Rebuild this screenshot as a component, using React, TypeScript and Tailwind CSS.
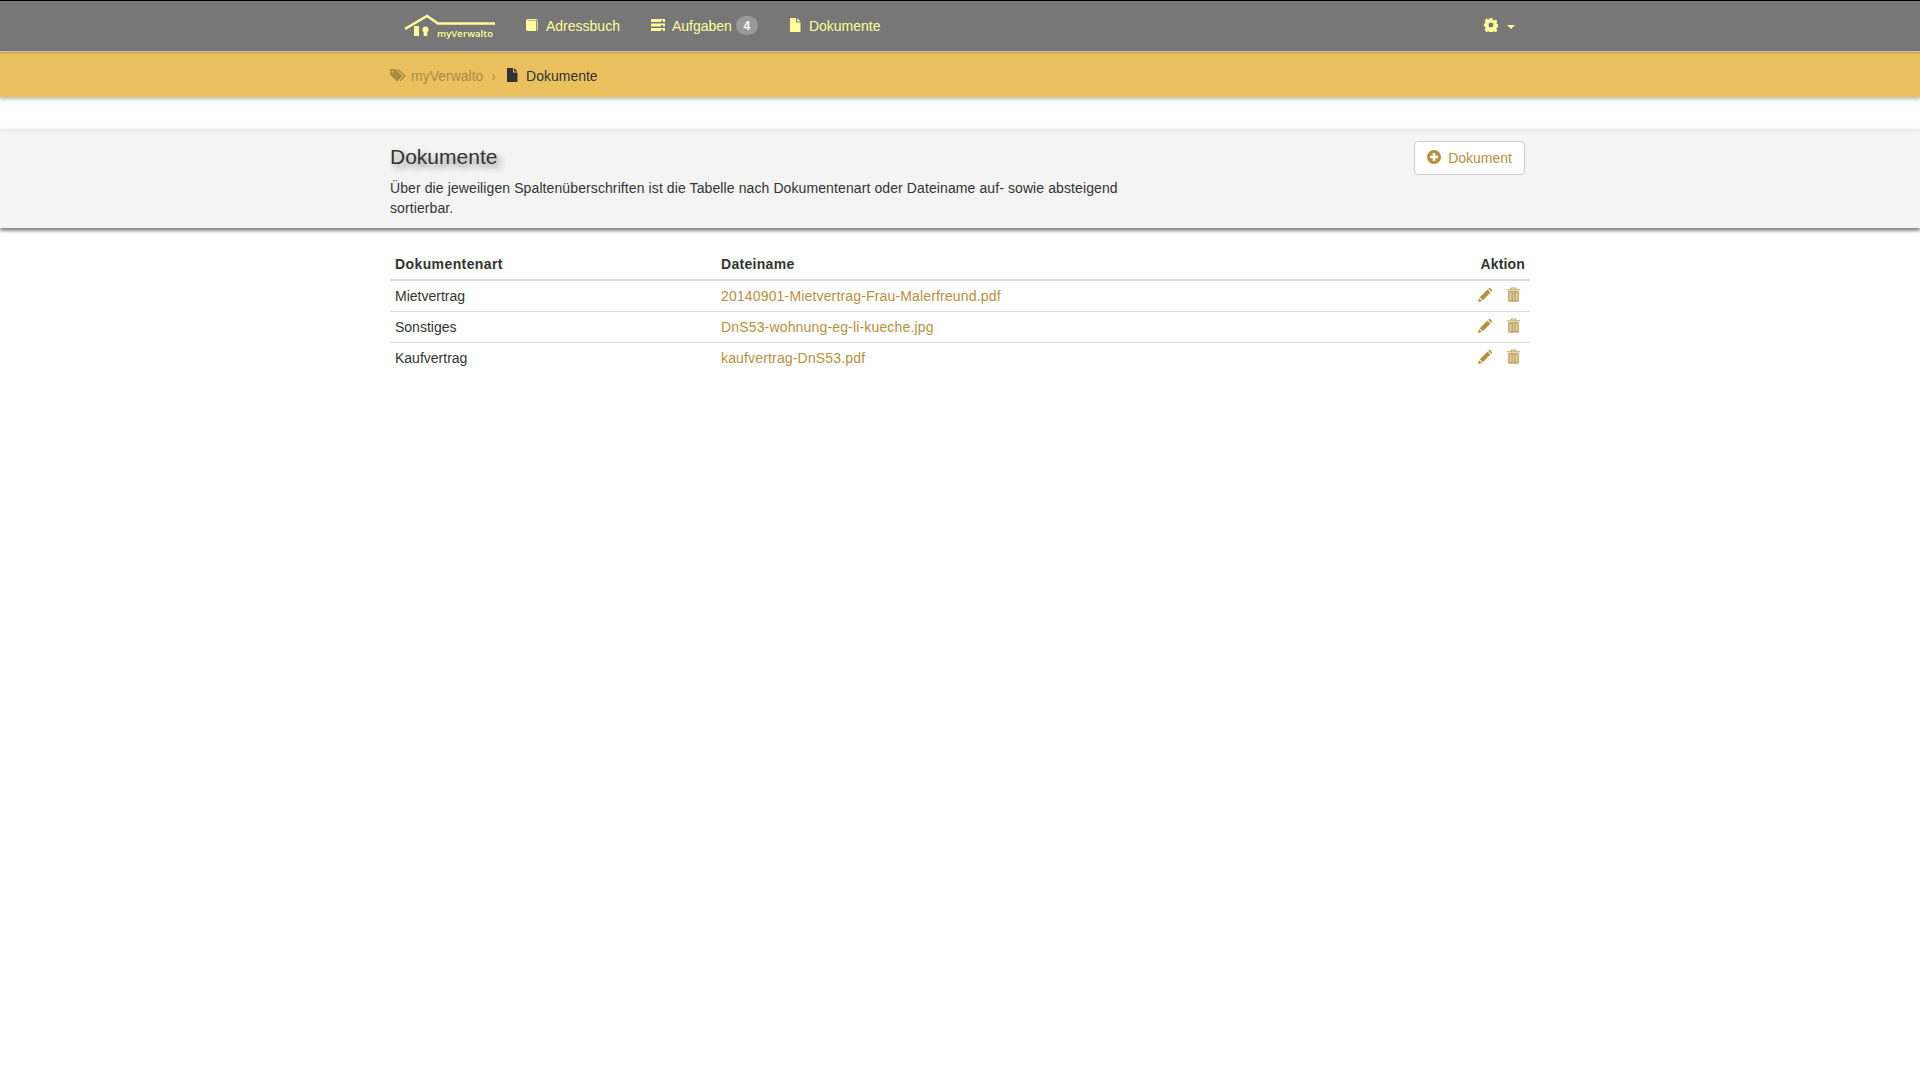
import React from 'react';

const Book = ({ className }: { className?: string }) => (
  <svg viewBox="0 0 14 14" className={className} fill="currentColor">
    <path d="M1 2.200 2.600 1H12v.9H3.600L2.600 2.600H11.200V13H2.200L1 12Z" />
    <path d="M12 2.200h1V12.600h-1z" opacity=".7" />
  </svg>
);

const Tasks = ({ className }: { className?: string }) => (
  <svg viewBox="0 0 14 14" className={className} fill="currentColor">
    <path d="M0 1h14v3H12V2.600h-2V4H0zM0 5.500h14v3h-2V7h-2v1.500H0zM0 10h14v3H12v-1.400h-2V13H0z" fillRule="evenodd" />
  </svg>
);

const FileIcon = ({ className }: { className?: string }) => (
  <svg viewBox="0 0 14 14" className={className} fill="currentColor">
    <path d="M2 0h6v4.500h4.500V14H2zM9 0l3.500 3.500H9z" />
  </svg>
);

const Cog = ({ className }: { className?: string }) => (
  <svg viewBox="0 0 14 14" className={className} fill="currentColor">
    <path
      fillRule="evenodd"
      d="M5.700 0h2.600l.4 1.900 1.200.5 1.700-1 1.800 1.800-1 1.700.5 1.200 2.100.4v2.600l-2.100.4-.5 1.200 1 1.700-1.800 1.800-1.700-1-1.200.5-.4 2.100H5.700l-.4-2.100-1.200-.5-1.700 1L.6 11.700l1-1.700-.5-1.200L0 8.300V5.700l1.100-.4.5-1.200-1-1.700L2.400.6l1.700 1 1.200-.5zM7 4.500a2.500 2.500 0 1 0 0 5 2.500 2.500 0 0 0 0-5z"
    />
  </svg>
);

const Tags = ({ className }: { className?: string }) => (
  <svg viewBox="0 0 17 14" className={className} fill="currentColor">
    <path d="M0 1h5.500l7 7-5.500 5.500-7-7zM2.500 2.500a1 1 0 1 0 0 2 1 1 0 0 0 0-2z" fillRule="evenodd" />
    <path d="M7 1h1.500l7.500 7-5.500 5.500-1-1L14 8z" />
  </svg>
);

const PlusSign = ({ className }: { className?: string }) => (
  <svg viewBox="0 0 14 14" className={className} fill="currentColor">
    <path
      fillRule="evenodd"
      d="M7 0a7 7 0 1 1 0 14A7 7 0 0 1 7 0zM5.700 3v2.700H3v2.600h2.700V11h2.600V8.300H11V5.700H8.300V3z"
    />
  </svg>
);

const Pencil = ({ className }: { className?: string }) => (
  <svg viewBox="0 0 14 14" className={className} fill="currentColor">
    <path d="M0 14l1-4 3 3zM1.800 9.200 9.500 1.500l3 3-7.700 7.700zM10.300.8l.7-.7c.4-.2.8-.2 1.100 0l1.800 1.800c.2.300.2.700 0 1l-.7.800z" />
  </svg>
);

const Trash = ({ className }: { className?: string }) => (
  <svg viewBox="0 0 14 15" className={className}>
    <path d="M4.500.5h5M4.500.5v1.500M9.500.5v1.500M0 2.500h14" stroke="currentColor" strokeWidth="1" fill="none" />
    <path d="M1.500 4.500h11V15h-11z" fill="currentColor" opacity=".45" />
    <path d="M1.500 4h11v1h-11zM1.500 14h11v1h-11zM1.500 4h1v11h-1zM11.500 4h1v11h-1zM5 5h1v9H5zM8 5h1v9H8z" fill="currentColor" />
  </svg>
);

const Logo = () => (
  <div className="relative w-[90px] h-[26px] text-[#ffff99]">
    <svg viewBox="0 0 90 26" className="absolute left-0 top-0 w-[90px] h-[26px]" fill="none">
      <path d="M0 16 L22 3 L33 10.500 H90" stroke="currentColor" strokeWidth="2.500" />
      <path d="M9 13h5v10H9z" fill="currentColor" />
      <path d="M20.500 13.500a3.200 3.200 0 0 1 1.800 5.800V23h-3.600v-3.700a3.200 3.200 0 0 1 1.800-5.800z" fill="currentColor" />
    </svg>
    <span className="absolute left-[32px] top-[14px] text-[9.5px] leading-[14px] font-semibold tracking-[0.1px] whitespace-nowrap font-['Open_Sans',sans-serif]">
      myVerwalto
    </span>
  </div>
);

const docs = [
  { art: 'Mietvertrag', name: '20140901-Mietvertrag-Frau-Malerfreund.pdf' },
  { art: 'Sonstiges', name: 'DnS53-wohnung-eg-li-kueche.jpg' },
  { art: 'Kaufvertrag', name: 'kaufvertrag-DnS53.pdf' },
];

export default function App() {
  return (
    <div className="min-h-[1080px] bg-white text-sm leading-5 text-[#333] font-['Liberation_Sans',Arial,sans-serif]">
      {/* Navbar */}
      <nav className="h-[52px] bg-[#777] border-t border-b border-t-black border-b-[#c9c9b8]">
        <div className="mx-auto w-[1170px] px-[15px] flex items-center justify-between h-[50px] text-[#ffff99]">
          <div className="flex items-center">
            <a className="pl-[15px] pr-[15px] flex items-center">
              <Logo />
            </a>
            <a className="flex items-center pl-[15px] pr-[16px]">
              <Book className="w-[14px] h-[14px] mr-[7px] -mt-[2px]" />
              Adressbuch
            </a>
            <a className="flex items-center px-[15px]">
              <Tasks className="w-[14px] h-[14px] mr-[7px] -mt-[2px]" />
              Aufgaben
              <span className="ml-[4px] w-[22px] h-[19px] rounded-[10px] bg-[#999] text-white text-xs font-bold flex items-center justify-center -mt-[1px]">
                4
              </span>
            </a>
            <a className="flex items-center px-[15px]">
              <FileIcon className="w-[14px] h-[14px] mr-[7px] -mt-[2px]" />
              Dokumente
            </a>
          </div>
          <a className="flex items-center">
            <Cog className="w-[14px] h-[14px] -mt-[2px]" />
            <span className="ml-[9px] mt-[1px] border-x-4 border-t-4 border-x-transparent border-t-[#ffff99]" />
            <span className="w-[15px]" />
          </a>
        </div>
      </nav>

      {/* Breadcrumb */}
      <div className="h-[45px] bg-[#ebc05f] shadow-[inset_0_3px_2px_-2px_rgba(0,0,0,0.2),0_2px_4px_rgba(0,0,0,0.3)]">
        <div className="mx-auto w-[1170px] px-[15px] pt-[2px] h-full flex items-center">
          <a className="flex items-center text-[#a98c44]">
            <Tags className="w-[17px] h-[14px] mr-[4px] -mt-[2px]" />
            myVerwalto
          </a>
          <span className="ml-[8px] mr-[9px] text-[#a98c44]">›</span>
          <FileIcon className="w-[14px] h-[14px] mr-[7px] -mt-[2px] text-[#333]" />
          <span>Dokumente</span>
        </div>
      </div>

      {/* Page header */}
      <div className="mt-[33px] h-[98px] bg-[#f4f4f4] border-t border-[#e4e4e4] shadow-[0_-1px_3px_rgba(0,0,0,0.1),0_3px_3px_rgba(0,0,0,0.45)]">
        <div className="mx-auto w-[1170px] pl-[15px] pr-[20px] flex items-start justify-between">
          <div className="w-[750px]">
            <h3 className="mt-[14px] mb-[10px] text-[21px] leading-[23px] font-normal text-[#333] [text-shadow:4px_4px_6px_#888]">
              Dokumente
            </h3>
            <p className="text-[#333] tracking-[0.1px]">
              Über die jeweiligen Spaltenüberschriften ist die Tabelle nach Dokumentenart oder Dateiname auf- sowie absteigend sortierbar.
            </p>
          </div>
          <button className="mt-[10px] h-[34px] px-[12px] flex items-center bg-white border border-[#ccc] rounded-[4px] text-[#b5903f]">
            <PlusSign className="w-[14px] h-[14px] mr-[7px] -mt-[2px]" />
            Dokument
          </button>
        </div>
      </div>

      {/* Table */}
      <div className="mx-auto w-[1170px] px-[15px] mt-[21px]">
        <table className="w-full border-collapse">
          <thead>
            <tr className="border-b-2 border-[#ddd]">
              <th className="w-[326px] p-[5px] text-left font-bold tracking-[0.4px]">Dokumentenart</th>
              <th className="p-[5px] text-left font-bold tracking-[0.3px]">Dateiname</th>
              <th className="p-[5px] text-right font-bold tracking-[0.15px]">Aktion</th>
            </tr>
          </thead>
          <tbody>
            {docs.map((d, i) => (
              <tr key={d.name} className={i > 0 ? 'border-t border-[#ddd]' : ''}>
                <td className="p-[5px]">{d.art}</td>
                <td className="p-[5px] text-[#b5903f] tracking-[0.16px]">{d.name}</td>
                <td className="p-[5px]">
                  <div className="flex justify-end items-center text-[#b5903f] pr-[5px] gap-[15px] -mt-[2px]">
                    <Pencil className="w-[14px] h-[14px]" />
                    <Trash className="w-[13px] h-[15px] -mt-[2px]" />
                  </div>
                </td>
              </tr>
            ))}
          </tbody>
        </table>
      </div>
    </div>
  );
}
